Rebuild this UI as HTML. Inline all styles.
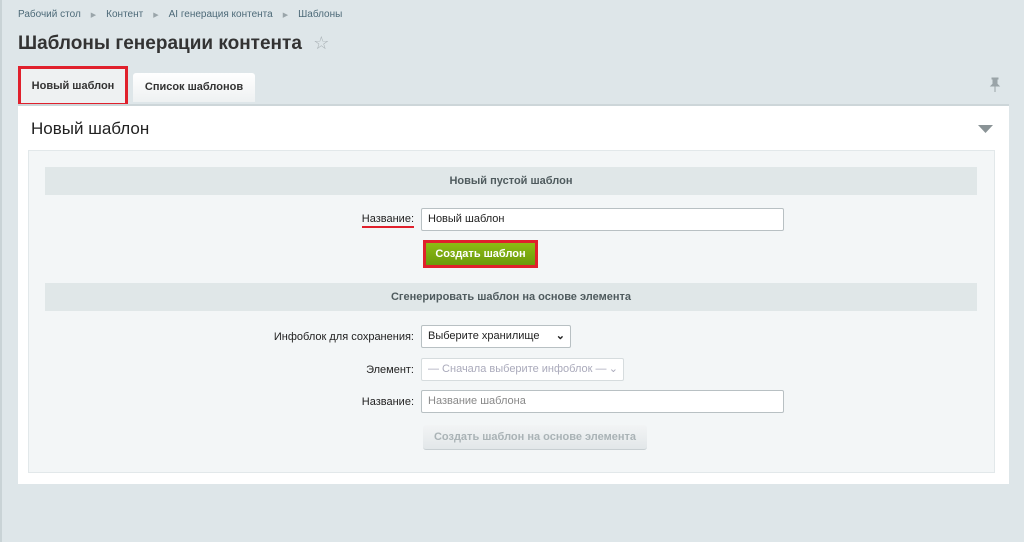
<!DOCTYPE html>
<html><head><meta charset="utf-8"><style>
*{box-sizing:border-box;margin:0;padding:0}
body{width:1024px;height:542px;background:#dee6e9;font-family:"Liberation Sans",Arial,sans-serif;position:relative;overflow:hidden}
.abs{position:absolute}
.bc{top:9px;left:18px;font-size:10px;color:#4d6a78}
.bc span.s{color:#9aa5aa;margin:0 10px;font-size:7px}
h1{position:absolute;left:18px;top:33px;font-size:19px;font-weight:bold;color:#333}
.tab{position:absolute;font-size:11px;font-weight:bold;color:#333;text-align:center}
.panel{left:18px;top:104px;width:991px;height:380px;background:#fff;border-top:2px solid #cdd6d9}
.inner{left:28px;top:150px;width:967px;height:323px;background:#f3f6f7;border:1px solid #e2e8ea}
.sh{position:absolute;left:45px;width:932px;height:28px;background:#e0e7e8;color:#4f5b5e;font-size:11px;font-weight:bold;text-align:center;line-height:28px}
.lbl{position:absolute;font-size:11px;color:#222;text-align:right;width:400px;left:14px}
.inp{position:absolute;left:421px;height:23px;background:#fff;border:1px solid #b8c0c3;border-radius:2px;font-size:11px;padding-left:6px;line-height:21px;color:#222}
</style></head><body>
<div class="abs" style="left:0;top:0;width:2px;height:542px;background:#c9d3d6"></div>
<div class="abs bc">Рабочий стол<span class="s">▶</span>Контент<span class="s">▶</span>AI генерация контента<span class="s">▶</span>Шаблоны</div>
<h1>Шаблоны генерации контента <span style="color:#a8b0b4;font-size:18px;font-weight:normal;margin-left:6px">☆</span></h1>
<div class="tab" style="left:18px;top:66px;width:110px;height:40px;border:3px solid #e0202c;background:#eef1f2;line-height:34px">Новый шаблон</div>
<div class="tab" style="left:133px;top:73px;width:122px;height:29px;background:linear-gradient(#fff,#eef1f2);border-radius:3px 3px 0 0;line-height:28px">Список шаблонов</div>
<svg class="abs" style="left:989px;top:77px" width="12" height="16" viewBox="0 0 12 16"><path d="M3 1h6v1H8v5l2 2H2l2-2V2H3z M6 9v6" fill="#9aa4a8" stroke="#9aa4a8" stroke-width="1"/></svg>
<div class="abs panel"></div>
<div class="abs" style="left:31px;top:119px;font-size:17px;color:#222">Новый шаблон</div>
<svg class="abs" style="left:978px;top:125px" width="15" height="8"><path d="M0 0h15L7.5 8z" fill="#8a9396"/></svg>
<div class="abs inner"></div>
<div class="sh" style="top:167px">Новый пустой шаблон</div>
<div class="lbl" style="top:213px">Название:</div>
<div class="abs" style="left:362px;top:226px;width:52px;height:2px;background:#e0202c"></div>
<div class="inp" style="top:208px;width:363px">Новый шаблон</div>
<div class="abs" style="left:423px;top:240px;width:115px;height:28px;border:3px solid #e0202c;background:linear-gradient(#8dbb14,#6b9a0b);color:#fff;font-size:11px;font-weight:bold;text-align:center;line-height:22px">Создать шаблон</div>
<div class="sh" style="top:283px">Сгенерировать шаблон на основе элемента</div>
<div class="lbl" style="top:331px">Инфоблок для сохранения:</div>
<div class="inp" style="top:325px;width:150px">Выберите хранилище<span style="position:absolute;right:5px;font-weight:bold">⌄</span></div>
<div class="lbl" style="top:364px">Элемент:</div>
<div class="inp" style="top:358px;width:203px;color:#aab;border-color:#d6dcde">— Сначала выберите инфоблок —<span style="position:absolute;right:5px">⌄</span></div>
<div class="lbl" style="top:396px">Название:</div>
<div class="inp" style="top:390px;width:363px;color:#888">Название шаблона</div>
<div class="abs" style="left:423px;top:425px;width:224px;height:25px;background:linear-gradient(#f2f4f5,#e2e7e9);border-radius:3px;border-bottom:1px solid #c8cfd2;color:#aab3b6;font-size:11px;font-weight:bold;text-align:center;line-height:24px">Создать шаблон на основе элемента</div>
</body></html>
